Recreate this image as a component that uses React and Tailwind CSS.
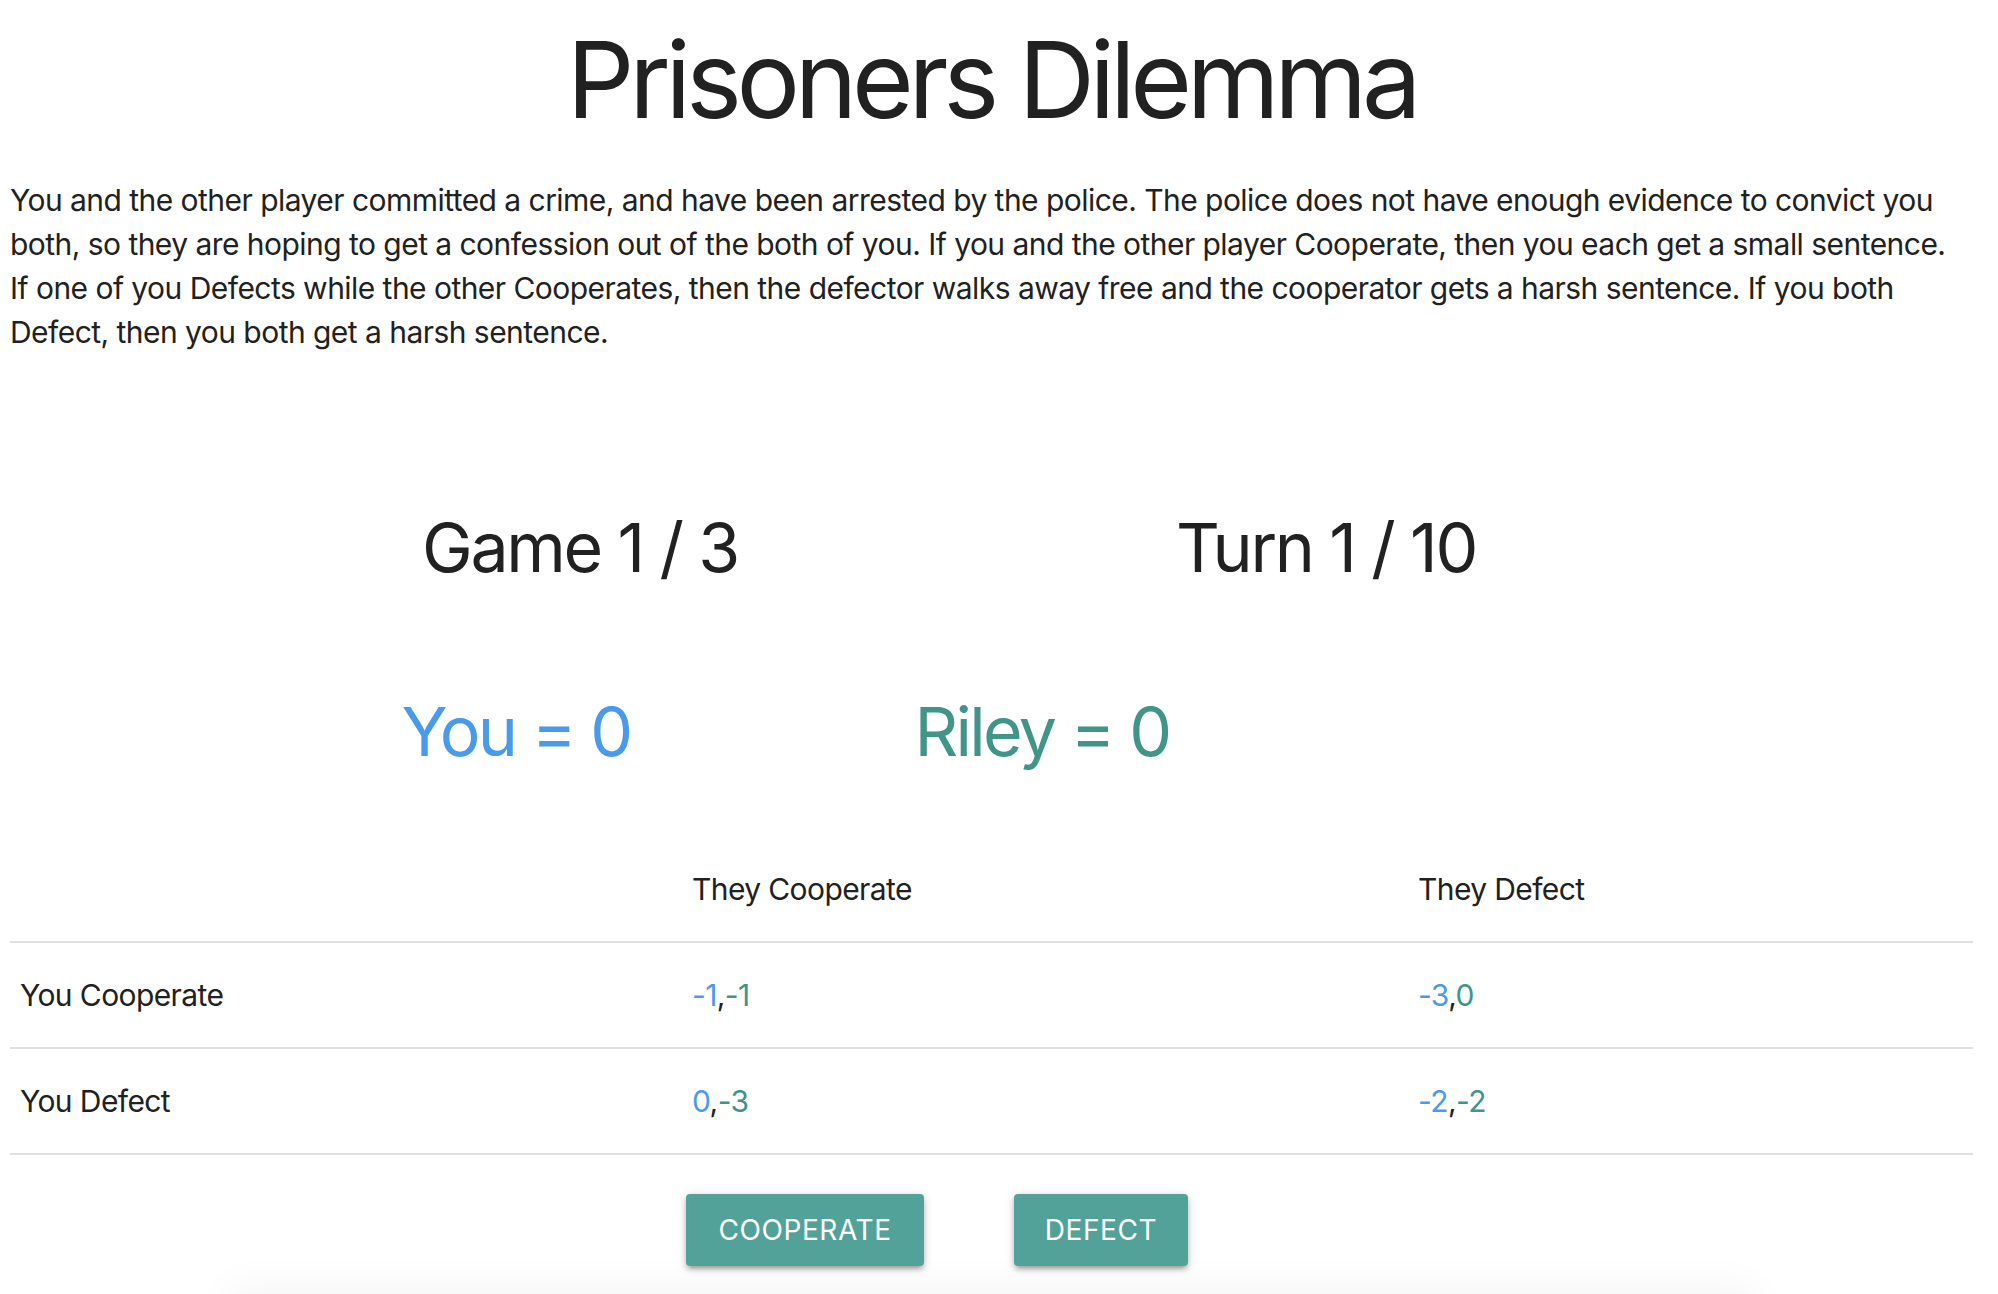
import React from 'react';

const payoffs = [
  { label: 'You Cooperate', cells: [['-1', '-1'], ['-3', '0']] },
  { label: 'You Defect', cells: [['0', '-3'], ['-2', '-2']] },
];

const btnClass =
  'h-[72px] rounded-[4px] bg-[#52a29a] text-[28px] tracking-[0.6px] text-white shadow-[0_4px_4px_rgba(0,0,0,0.14),0_6px_2px_-4px_rgba(0,0,0,0.12),0_2px_10px_rgba(0,0,0,0.2)]';

const App = () => {
  return (
    <div className="min-h-screen bg-white text-[#212121] pl-[10px] pr-[25px] font-['Inter','Liberation_Sans',sans-serif]">
      <h1 className="pt-[21px] text-center text-[106px] leading-[117px] font-normal tracking-[-0.05em]">Prisoners Dilemma</h1>

      <p className="mt-[40px] mr-[12px] text-[30px] leading-[44px] tracking-[-0.018em]">
        You and the other player committed a crime, and have been arrested by the police. The police does not have enough
        evidence to convict you both, so they are hoping to get a confession out of the both of you. If you and the other
        player Cooperate, then you each get a small sentence. If one of you Defects while the other Cooperates, then the
        defector walks away free and the cooperator gets a harsh sentence. If you both Defect, then you both get a harsh
        sentence.
      </p>

      {/* game / turn counters */}
      <div className="mt-[156px] flex pl-[320px] gap-[246px] text-[68px] leading-[75px] tracking-[-0.035em]">
        <div className="w-[500px] text-center">Game 1 / 3</div>
        <div className="w-[500px] text-center">Turn 1 / 10</div>
      </div>

      {/* scores */}
      <div className="mt-[109px] flex pl-[306px] gap-[126px] text-[68px] leading-[75px] tracking-[-0.04em]">
        <div className="w-[400px] text-center text-[#4a9aec]">You = 0</div>
        <div className="w-[400px] text-center text-[#409488]">Riley = 0</div>
      </div>

      <table className="mt-[68px] w-full border-collapse text-[30px] leading-[44px] tracking-[-0.02em]">
        <thead>
          <tr className="border-b-2 border-[#e0e0e0]">
            <th className="w-[672px] px-[10px] py-[30px] text-left font-normal"></th>
            <th className="w-[726px] px-[10px] py-[30px] text-left font-normal">They Cooperate</th>
            <th className="px-[10px] py-[30px] text-left font-normal">They Defect</th>
          </tr>
        </thead>
        <tbody>
          {payoffs.map((row) => (
            <tr key={row.label} className="border-b-2 border-[#e0e0e0]">
              <td className="px-[10px] py-[30px]">{row.label}</td>
              {row.cells.map(([mine, theirs], i) => (
                <td key={i} className="px-[10px] py-[30px]">
                  <span className="text-[#4a9aec]">{mine}</span>,<span className="text-[#409488]">{theirs}</span>
                </td>
              ))}
            </tr>
          ))}
        </tbody>
      </table>

      <div className="mt-[39px] flex pl-[676px] gap-[90px]">
        <button className={`${btnClass} w-[238px]`}>COOPERATE</button>
        <button className={`${btnClass} w-[174px]`}>DEFECT</button>
      </div>

      <div className="mx-[220px] mt-[30px] h-[200px] bg-white shadow-[0_-6px_40px_rgba(0,0,0,0.05)]"></div>
    </div>
  );
};

export default App;
